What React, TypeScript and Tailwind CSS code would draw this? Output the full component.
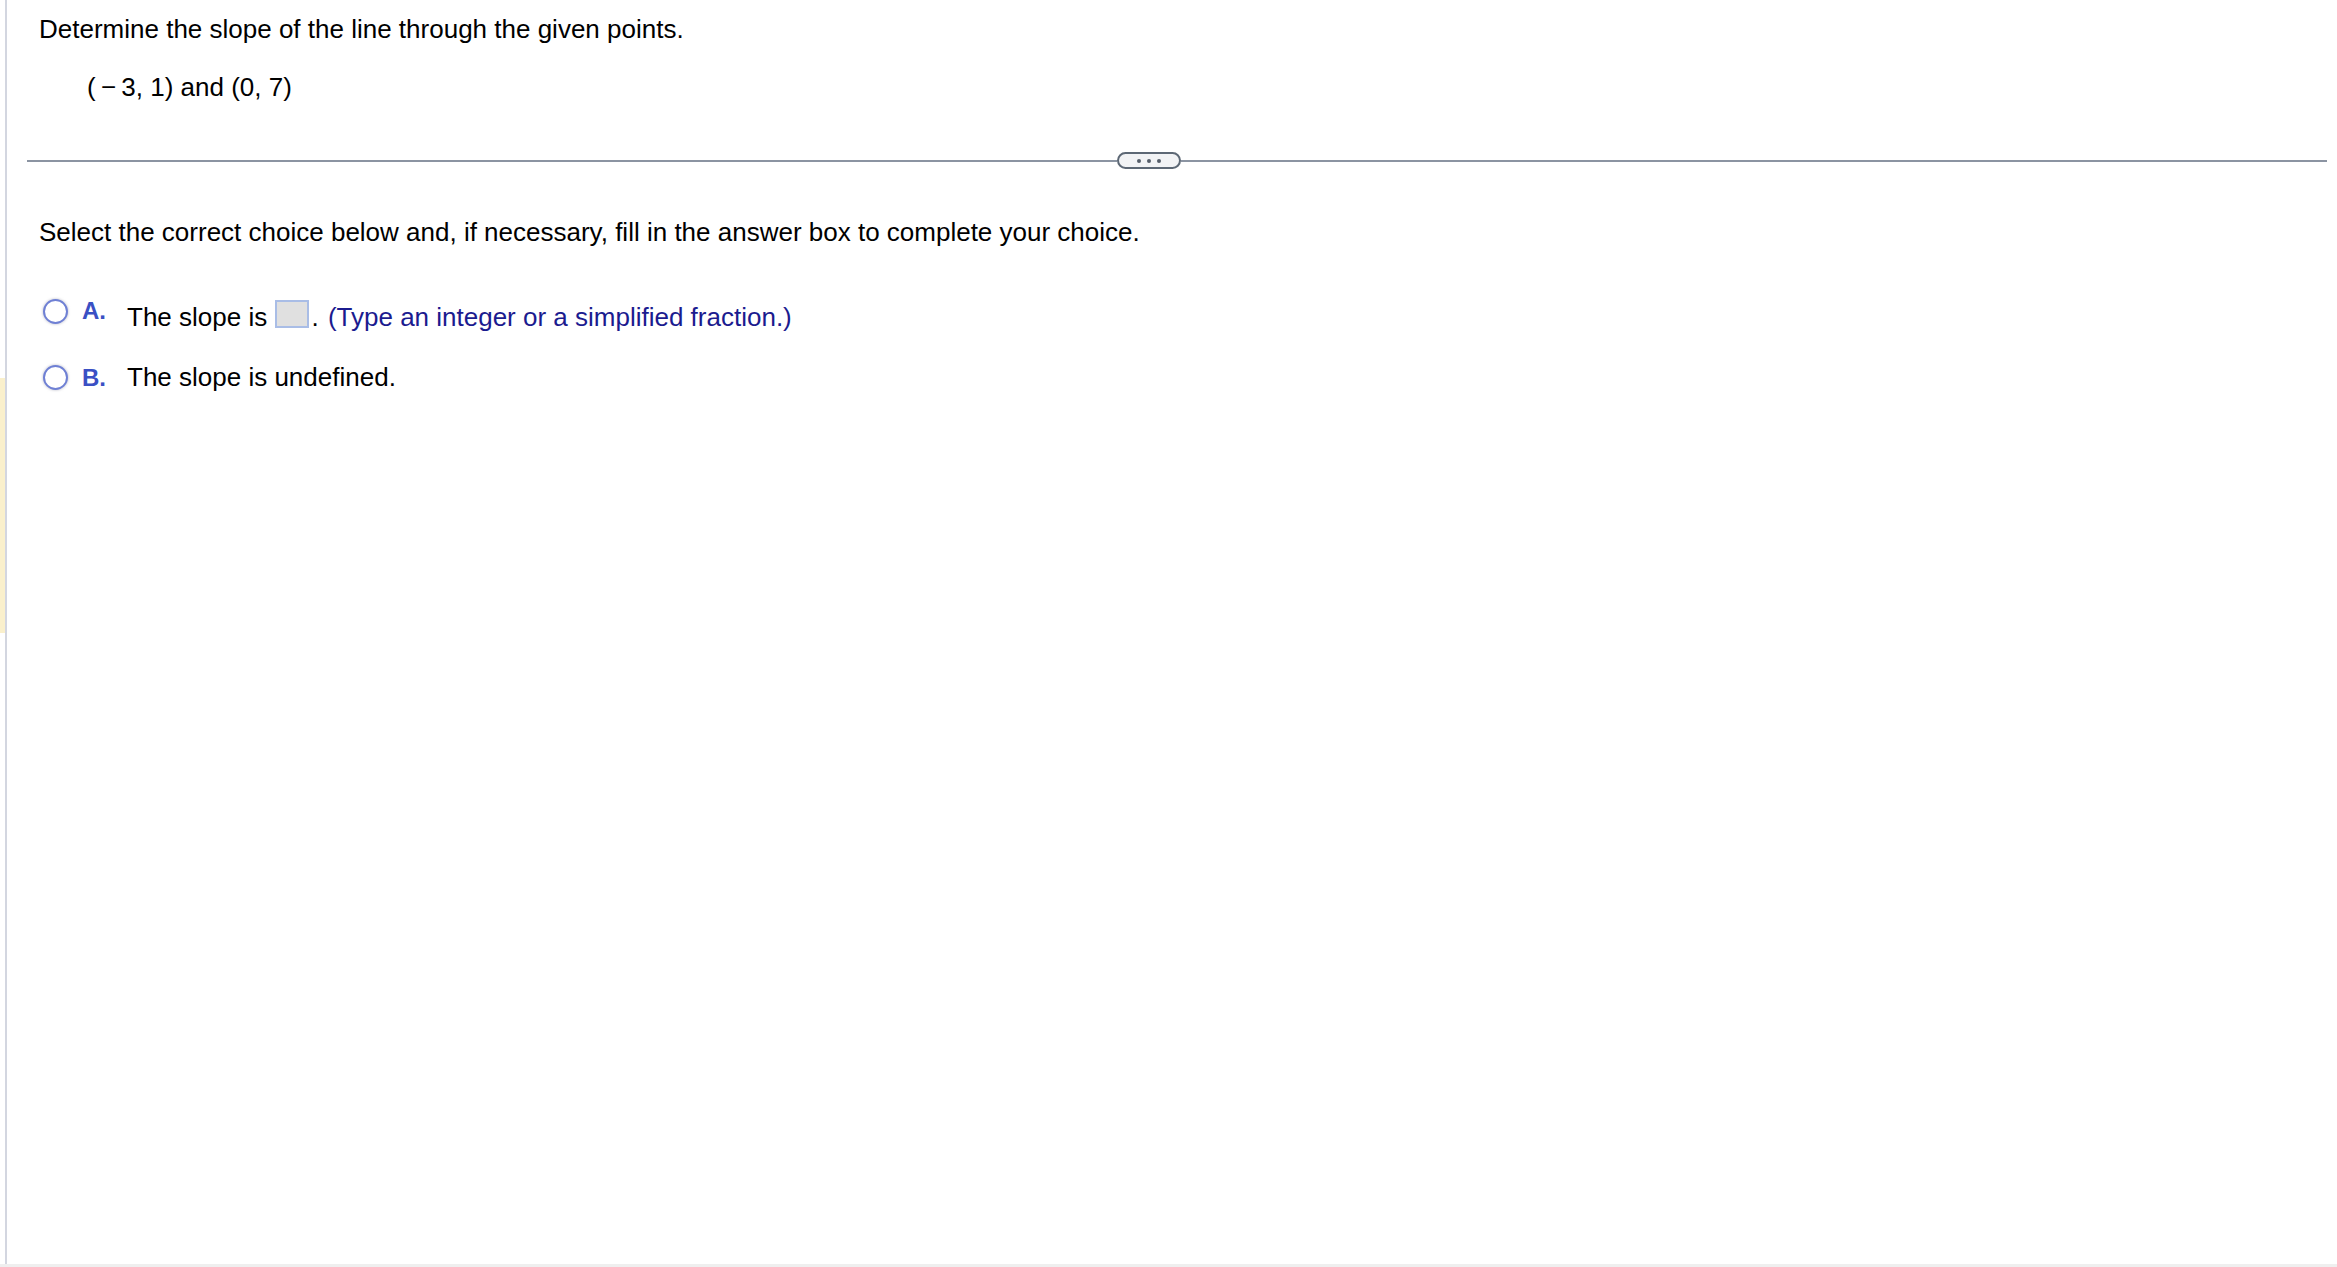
const font = "font-['Liberation_Sans',Arial,sans-serif]";

function Radio({ className = "" }: { className?: string }) {
  return (
    <span
      className={`block h-[25px] w-[25px] shrink-0 rounded-full border-2 border-[#6f80d4] bg-white shadow-[0_0_2px_1px_rgba(200,200,210,0.6)] ${className}`}
    />
  );
}

function Divider() {
  return (
    <div className="ml-[20px] mr-[10px] mt-[50px] flex h-[17px] items-center">
      <div className="h-[2px] w-[1090px] bg-[#8b94a2]" />
      <button
        type="button"
        aria-label="Show more"
        className="flex h-[17px] w-[64px] shrink-0 items-center justify-center gap-[6px] rounded-full border-2 border-[#5d6875] bg-[#f2f3f5]"
      >
        <span className="h-[4px] w-[4px] rounded-full bg-[#555e6a]" />
        <span className="h-[4px] w-[4px] rounded-full bg-[#555e6a]" />
        <span className="h-[4px] w-[4px] rounded-full bg-[#555e6a]" />
      </button>
      <div className="h-[2px] flex-1 bg-[#8b94a2]" />
    </div>
  );
}

export default function App() {
  return (
    <div className={`flex h-[1267px] w-[2337px] flex-col bg-white text-black ${font}`}>
      <div className="flex h-[1264px]">
        {/* left gutter with highlight */}
        <div className="flex w-[5px] flex-col">
          <div className="h-[378px]" />
          <div className="h-[255px] bg-[#faf0cc]" />
        </div>
        <div className="w-[2px] bg-[#d3d6e0]" />

        <main className="flex-1">
          <div className="pl-[32px] pt-[14px] text-[26px] leading-[30px]">
            <p>Determine the slope of the line through the given points.</p>
            <p className="ml-[48px] mt-[28px]">({"\u2009"}−{"\u2009"}3, 1) and (0, 7)</p>
          </div>

          <Divider />

          <p className="ml-[32px] mt-[48px] text-[26px] leading-[30px]">
            Select the correct choice below and, if necessary, fill in the answer box to complete your choice.
          </p>

          <div className="ml-[36px] mt-[50px] flex h-[36px] items-start">
            <Radio className="mt-[2px]" />
            <span className="ml-[14px] mt-[2px] w-[45px] text-[24px] font-bold leading-[24px] text-[#3a50c4]">A.</span>
            <p className="mt-[3px] text-[26px] leading-[30px]">
              The slope is{" "}
              <span className="ml-[1px] mr-[2px] inline-block h-[28px] w-[34px] border-2 border-[#a9bde6] bg-[#e0e0e0] align-[-2px]" />
              .{" "}
              <span className="ml-[2px] text-[#1b1b8f]">(Type an integer or a simplified fraction.)</span>
            </p>
          </div>

          <div className="ml-[36px] mt-[29px] flex items-start">
            <Radio className="mt-[3px]" />
            <span className="ml-[14px] mt-[1px] w-[45px] text-[24px] font-bold leading-[30px] text-[#3a50c4]">B.</span>
            <p className="text-[26px] leading-[30px]">The slope is undefined.</p>
          </div>
        </main>
      </div>
      <div className="h-[3px] bg-[#efefef]" />
    </div>
  );
}
